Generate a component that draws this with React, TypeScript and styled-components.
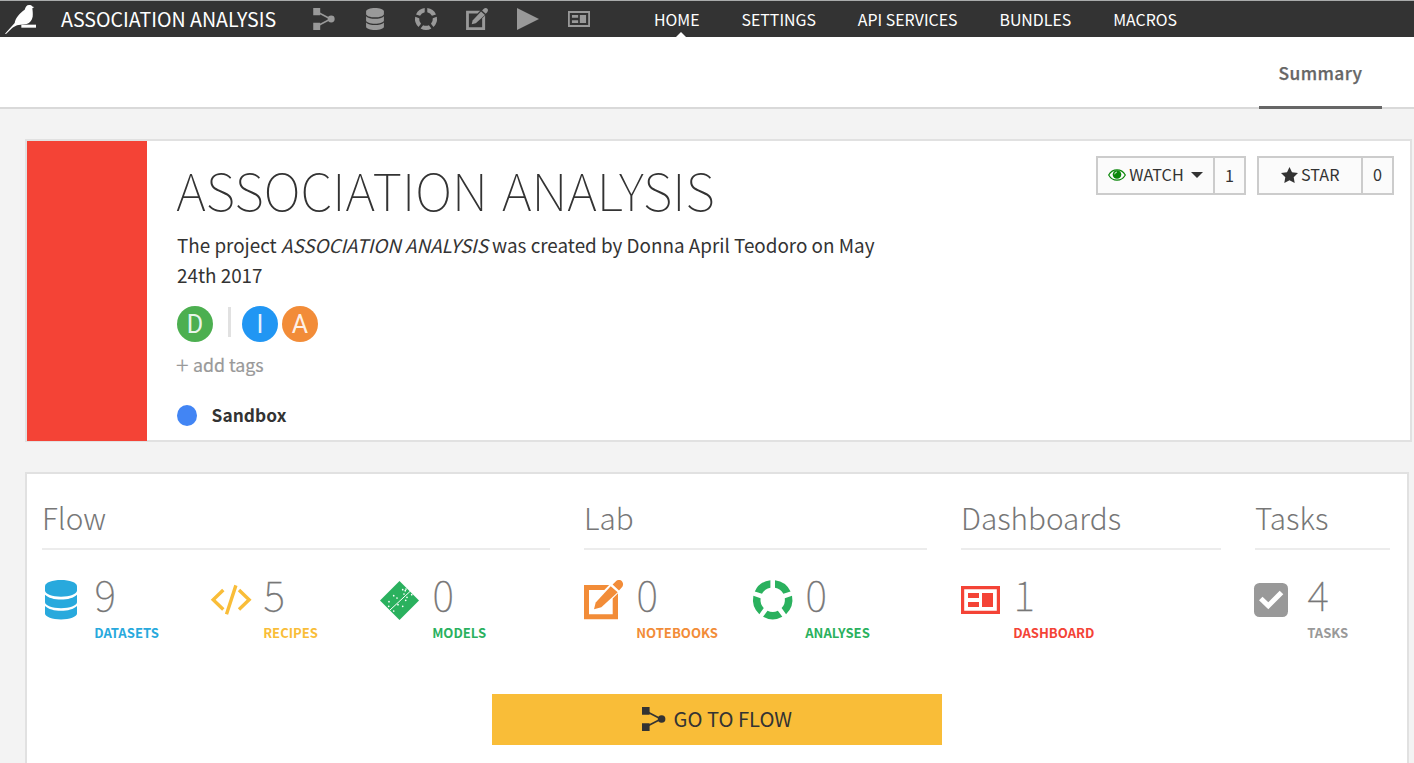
import React from 'react';
import styled, { createGlobalStyle, css } from 'styled-components';

const sans = '"Noto Sans CJK SC", "Noto Sans", sans-serif';

const palette = {
  blue: '#28a9dd',
  yellow: '#f9bd38',
  green: '#2ab15e',
  orange: '#f28c38',
  red: '#f44336',
  grey: '#999999',
};

const GlobalStyle = createGlobalStyle`
  * { box-sizing: border-box; }
  body {
    margin: 0;
    height: 763px;
    overflow: hidden;
    background: #f3f3f3;
    color: #333;
    font-family: ${sans};
  }
  svg { display: block; flex: none; overflow: visible; }
`;

/* ---------- icons ---------- */

interface IconProps {
  width: number;
  height: number;
}

const FlowIcon = ({ width, height }: IconProps) => (
  <svg width={width} height={height} viewBox="0 0 23.5 24" fill="currentColor">
    <path d="M0 0h7.6v7.8H0zM0 16.2h7.6V24H0z" />
    <circle cx="19.6" cy="12" r="3.8" />
    <path d="M6 5.2 19 12 6 18.8" fill="none" stroke="currentColor" strokeWidth="1.7" />
  </svg>
);

const DatabaseIcon = ({ width, height }: IconProps) => (
  <svg width={width} height={height} viewBox="0 0 32 39.5" fill="currentColor">
    <path d="M0 6.2C0 2.4 7.5 0 16 0s16 2.4 16 6.2v4.4c0 3.4-7.5 6.2-16 6.2S0 14 0 10.6Z" />
    <path d="M0 14.7c3 3.2 9.5 4.8 16 4.8s13-1.6 16-4.8v7.6c0 3.4-7.5 5.9-16 5.9S0 25.7 0 22.3Z" />
    <path d="M0 25.9c3 3.2 9.5 4.8 16 4.8s13-1.6 16-4.8v7.7c0 3.4-7.5 5.9-16 5.9S0 37 0 33.6Z" />
  </svg>
);

const RingIcon = ({ width, height }: IconProps) => {
  const outer = 19.7;
  const inner = 12.2;
  const half = 2.3;
  const point = (radius: number, angle: number, side: number) => {
    const spread = Math.asin(half / radius) * side;
    const a = angle + spread;
    return `${(20 + radius * Math.sin(a)).toFixed(2)} ${(20 - radius * Math.cos(a)).toFixed(2)}`;
  };
  const step = (Math.PI * 2) / 5;
  return (
    <svg width={width} height={height} viewBox="0.3 0.3 39.4 39.4" fill="currentColor">
      {[0, 1, 2, 3, 4].map((n) => {
        const from = n * step;
        const to = from + step;
        return (
          <path
            key={n}
            d={`M${point(outer, from, 1)}A${outer} ${outer} 0 0 1 ${point(outer, to, -1)}L${point(inner, to, -1)}A${inner} ${inner} 0 0 0 ${point(inner, from, 1)}Z`}
          />
        );
      })}
    </svg>
  );
};

const NotebookIcon = ({ width, height }: IconProps) => (
  <svg width={width} height={height} viewBox="0 0 39 39.3" fill="currentColor">
    <path d="M0 5h25.2l-4.9 5H5v24.3h23.7V18.5l5.3-5.2v26H0Z" />
    <path d="M26.7 6.3l7 6L17.3 27.3 10 29.2l1.7-6.8Z" />
    <path d="M28.6 4.5l3.1-3.1c2-2 5-1.7 6.4 0 1.5 1.7 1.3 4.3-.4 6.1l-2.7 2.9Z" />
  </svg>
);

const PlayIcon = ({ width, height }: IconProps) => (
  <svg width={width} height={height} viewBox="0 0 22 22" fill="currentColor">
    <path d="M0 0 22 11 0 22Z" />
  </svg>
);

const DashboardIcon = ({ width, height }: IconProps) => (
  <svg width={width} height={height} viewBox="0 0 39 28" fill="currentColor">
    <path fillRule="evenodd" d="M0 0h39v28H0zM3.2 3.2v21.6h32.6V3.2z" />
    <path d="M7 7h11v5H7zM7 16h11v5H7zM21 7h11v14H21z" />
  </svg>
);

const CodeIcon = ({ width, height }: IconProps) => (
  <svg width={width} height={height} viewBox="0 0 40 30" fill="none" stroke="currentColor" strokeWidth="3.4">
    <path d="M12.3 5 2.2 14.8l10.1 9.7M28 5l10.1 9.8L28 24.5M24.9.4 15.5 29.2" />
  </svg>
);

const modelDots = [
  [13.7, 14.7], [9, 20.7], [8.7, 25.3], [13.7, 30], [22.7, 8.7], [25.3, 9.7], [24, 13],
  [17, 17], [18, 23.7], [22.7, 25.3], [25.7, 19.3], [27, 16.3], [31.7, 13.7], [26, 8],
];

const ModelIcon = ({ width, height }: IconProps) => (
  <svg width={width} height={height} viewBox="0 0 39 39" fill="currentColor">
    <path d="M19.5 0 39 19.5 19.5 39 0 19.5Z" />
    <path d="M9.7 29.3 30.5 10" stroke="#fff" strokeWidth="1" />
    {modelDots.map(([x, y]) => (
      <circle key={`${x}-${y}`} cx={x} cy={y} r="0.85" fill="#fff" />
    ))}
  </svg>
);

const CheckIcon = ({ width, height }: IconProps) => (
  <svg width={width} height={height} viewBox="0 0 34 34">
    <rect width="34" height="34" rx="5.5" fill="currentColor" />
    <path d="M5 17.3 8.5 13.7l5.8 5.6L25.7 7.7l3.6 3.6-15 15Z" fill="#fff" />
  </svg>
);

const BirdIcon = ({ width, height }: IconProps) => (
  <svg width={width} height={height} viewBox="15 15 93 87" fill="#fff">
    <path d="M15 101 44 69C46 54 60 38 74 29 77 20 80 15 87 15c6 0 9 2 11 5l5 1-6 4c1 8 2 17 1 25-2 10-8 19-18 22-8 2-16 1-24 3-14 2-20 10-38 27Z" />
    <path d="M64 74h44v9H64z" />
  </svg>
);

const EyeIcon = ({ width, height }: IconProps) => (
  <svg width={width} height={height} viewBox="0 0 18 12">
    <path d="M.7 6C4.5-.9 13.5-.9 17.3 6 13.5 12.9 4.5 12.9.7 6Z" fill="none" stroke="#0a870a" strokeWidth="1.2" />
    <circle cx="9" cy="5.5" r="4.3" fill="#0a870a" />
    <path d="M6.7 5.3A2.4 2.4 0 0 1 9 3" fill="none" stroke="#fff" strokeWidth=".8" />
  </svg>
);

const StarIcon = ({ width, height }: IconProps) => (
  <svg width={width} height={height} viewBox="0 0 17 16" fill="currentColor">
    <path d="M8.5 0l2.5 5.3 6 .8-4.3 4.1 1 5.8-5.2-2.8L3.3 16l1-5.8L0 6.1l6-.8Z" />
  </svg>
);

/* ---------- top bar ---------- */

const TopBar = styled.header`
  display: flex;
  height: 37px;
  padding-left: 5px;
  border-top: 1px solid #a9abab;
  background: #333;
  color: #fff;
`;

const Logo = styled.div`
  width: 56px;
  padding-top: 4px;
`;

const Brand = styled.div`
  width: 252px;
  font-size: 19.6px;
  line-height: 36px;
  white-space: nowrap;
`;

const ToolIcons = styled.div`
  display: flex;
  align-items: center;
  width: 341px;
  color: #999;
`;

const Tool = styled.span<{ $width: number }>`
  width: ${(p) => p.$width}px;
`;

const Nav = styled.nav`
  display: flex;
  height: 36px;
  gap: 41.9px;
`;

const NavLink = styled.a<{ $active?: boolean }>`
  position: relative;
  font-size: 15.9px;
  line-height: 38px;
  white-space: nowrap;
  ${(p) =>
    p.$active &&
    css`
      &::after {
        content: '';
        position: absolute;
        left: 50%;
        bottom: 0;
        margin-left: -1px;
        border: 5px solid transparent;
        border-top: 0;
        border-bottom-color: #fff;
      }
    `}
`;

/* ---------- tab bar ---------- */

const TabBar = styled.div`
  display: flex;
  justify-content: flex-end;
  height: 72px;
  padding-right: 32px;
  background: #fff;
  box-shadow: inset 0 -2px #d9d9d9;
`;

const Tab = styled.div`
  width: 123px;
  border-bottom: 3px solid #666;
  color: #666;
  font-size: 17.4px;
  font-weight: 500;
  letter-spacing: 0.4px;
  line-height: 72px;
  text-align: center;
  -webkit-text-stroke: 0.25px #666;
`;

/* ---------- project card ---------- */

const Page = styled.main`
  padding: 30px 0 0 25px;
`;

const Card = styled.section<{ $width: number }>`
  width: ${(p) => p.$width}px;
  border: 2px solid #e1e1e1;
  background: #fff;
`;

const ProjectCard = styled(Card)`
  display: flex;
  height: 303px;
`;

const Swatch = styled.div`
  width: 120px;
  height: 300px;
  background: ${palette.red};
`;

const ProjectInfo = styled.div`
  flex: 1;
  padding: 18px 0 0 30px;
`;

const Title = styled.h1`
  margin: 0 0 11px -0.7px;
  font-size: 51.4px;
  font-weight: 100;
  line-height: 60px;
  word-spacing: 3px;
  white-space: nowrap;
`;

const Description = styled.p`
  width: 715px;
  margin: 0;
  font-size: 18.85px;
  line-height: 30px;
`;

const People = styled.div`
  display: flex;
  margin-top: 16px;
`;

const Avatar = styled.span<{ $color: string }>`
  width: 36px;
  height: 36px;
  margin-right: 4px;
  border-radius: 50%;
  background: ${(p) => p.$color};
  color: rgba(255, 255, 255, 0.9);
  font: 400 25px/37px Roboto, sans-serif;
  text-align: center;
`;

const Separator = styled.span`
  width: 3px;
  height: 30px;
  margin: 1px 11px 0;
  background: #e1e1e1;
`;

const AddTags = styled.div`
  display: flex;
  margin-top: 7px;
  color: #999;
  font-size: 17.8px;
  line-height: 30px;
  -webkit-text-stroke: 0.2px #999;
`;

const Plus = styled.span`
  width: 17px;
  margin-left: -1px;
  font-size: 23.5px;
  font-weight: 300;
  line-height: 30px;
`;

const Status = styled.div`
  display: flex;
  align-items: center;
  gap: 14.5px;
  margin-top: 24px;
  font-size: 17.3px;
  font-weight: 700;
  letter-spacing: 0.1px;
  line-height: 24px;
`;

const Dot = styled.span`
  width: 20px;
  height: 21px;
  margin-top: 1px;
  border-radius: 50%;
  background: #4285f4;
`;

const Actions = styled.div`
  display: flex;
  gap: 11px;
  padding: 15px 16px 0 0;
`;

const ActionGroup = styled.div`
  display: flex;
  height: 39px;
  border: 2px solid #ccc;
  background: #fbfbfb;
`;

const Action = styled.button<{ $width: number }>`
  display: flex;
  align-items: center;
  justify-content: center;
  width: ${(p) => p.$width}px;
  padding: 0 0 1px;
  border: 0;
  border-right: 2px solid #ccc;
  background: none;
  color: #333;
  font: 400 16.2px/33px ${sans};
`;

const ActionLabel = styled.span`
  margin: -1px 0 0 3.5px;
`;

const Count = styled.span<{ $raise?: boolean }>`
  width: 29px;
  font-size: 16.2px;
  line-height: ${(p) => (p.$raise ? 33 : 35)}px;
  text-align: center;
`;

const Caret = styled.span`
  margin-left: 7.5px;
  border: 6px solid transparent;
  border-top-color: #333;
  border-bottom: 0;
`;

/* ---------- summary card ---------- */

const SummaryCard = styled(Card)`
  height: 320px;
  margin-top: 30px;
  padding: 22px 0 0 15px;
`;

const Groups = styled.div`
  display: grid;
  grid-template-columns: 508px 343px 260px 135px;
  column-gap: 34px;
`;

const GroupTitle = styled.h2`
  height: 54px;
  margin: 0 0 19px;
  border-bottom: 2px solid #ececec;
  color: #777;
  font-size: 29.7px;
  font-weight: 300;
  line-height: 43px;
`;

const Stats = styled.div`
  display: flex;
`;

const Stat = styled.div<{ $color: string }>`
  display: flex;
  width: 169px;
  color: ${(p) => p.$color};
`;

const StatIcon = styled.div<{ $shift: number }>`
  display: flex;
  align-items: center;
  width: ${(p) => 52.2 - p.$shift}px;
  height: 62px;
  margin-left: ${(p) => p.$shift}px;
`;

const StatValue = styled.div`
  height: 54px;
  margin-left: 0.4px;
  color: #777;
  font-size: 41px;
  font-weight: 100;
  line-height: 48px;
  -webkit-text-stroke: 0.3px #777;
`;

const StatLabel = styled.div`
  font-size: 13.1px;
  font-weight: 700;
  line-height: 20px;
`;

const FlowButton = styled.button`
  display: flex;
  align-items: center;
  justify-content: center;
  gap: 8px;
  width: 450px;
  height: 51px;
  margin: 51px 0 0 450px;
  padding: 0 0 2px;
  border: 0;
  background: ${palette.yellow};
  color: #333;
  font: 400 20.2px/48px ${sans};
`;

interface StatData {
  value: number;
  label: string;
  color: string;
  icon: React.ReactNode;
  shift?: number;
}

const groups: { title: string; stats: StatData[] }[] = [
  {
    title: 'Flow',
    stats: [
      { value: 9, label: 'DATASETS', color: palette.blue, icon: <DatabaseIcon width={32} height={39.5} />, shift: 3 },
      { value: 5, label: 'RECIPES', color: palette.yellow, icon: <CodeIcon width={40} height={30} /> },
      { value: 0, label: 'MODELS', color: palette.green, icon: <ModelIcon width={39} height={39} />, shift: -0.5 },
    ],
  },
  {
    title: 'Lab',
    stats: [
      { value: 0, label: 'NOTEBOOKS', color: palette.orange, icon: <NotebookIcon width={39} height={39.3} /> },
      { value: 0, label: 'ANALYSES', color: palette.green, icon: <RingIcon width={39.4} height={39.4} />, shift: -0.5 },
    ],
  },
  {
    title: 'Dashboards',
    stats: [{ value: 1, label: 'DASHBOARD', color: palette.red, icon: <DashboardIcon width={39} height={28} /> }],
  },
  {
    title: 'Tasks',
    stats: [{ value: 4, label: 'TASKS', color: palette.grey, icon: <CheckIcon width={34} height={36} />, shift: -1 }],
  },
];

export default function App() {
  return (
    <>
      <GlobalStyle />
      <TopBar>
        <Logo>
          <BirdIcon width={31} height={29} />
        </Logo>
        <Brand>ASSOCIATION ANALYSIS</Brand>
        <ToolIcons>
          <Tool $width={53}><FlowIcon width={22} height={22} /></Tool>
          <Tool $width={49}><DatabaseIcon width={18} height={22} /></Tool>
          <Tool $width={51}><RingIcon width={22} height={22} /></Tool>
          <Tool $width={51}><NotebookIcon width={22} height={22} /></Tool>
          <Tool $width={51}><PlayIcon width={22} height={22} /></Tool>
          <Tool $width={86}><DashboardIcon width={22} height={16} /></Tool>
        </ToolIcons>
        <Nav>
          <NavLink $active>HOME</NavLink>
          <NavLink>SETTINGS</NavLink>
          <NavLink>API SERVICES</NavLink>
          <NavLink>BUNDLES</NavLink>
          <NavLink>MACROS</NavLink>
        </Nav>
      </TopBar>
      <TabBar>
        <Tab>Summary</Tab>
      </TabBar>
      <Page>
        <ProjectCard $width={1387}>
          <Swatch />
          <ProjectInfo>
            <Title>ASSOCIATION ANALYSIS</Title>
            <Description>
              The project <em>ASSOCIATION ANALYSIS</em> was created by Donna April Teodoro on May 24th 2017
            </Description>
            <People>
              <Avatar $color="#4caf50">D</Avatar>
              <Separator />
              <Avatar $color="#2196f3">I</Avatar>
              <Avatar $color={palette.orange}>A</Avatar>
            </People>
            <AddTags>
              <Plus>+</Plus>
              <span>add tags</span>
            </AddTags>
            <Status>
              <Dot />
              Sandbox
            </Status>
          </ProjectInfo>
          <Actions>
            <ActionGroup>
              <Action $width={117}>
                <EyeIcon width={18} height={12} />
                <ActionLabel>WATCH</ActionLabel>
                <Caret />
              </Action>
              <Count>1</Count>
            </ActionGroup>
            <ActionGroup>
              <Action $width={104}>
                <StarIcon width={17} height={16} />
                <ActionLabel>STAR</ActionLabel>
              </Action>
              <Count $raise>0</Count>
            </ActionGroup>
          </Actions>
        </ProjectCard>
        <SummaryCard $width={1384}>
          <Groups>
            {groups.map((group) => (
              <div key={group.title}>
                <GroupTitle>{group.title}</GroupTitle>
                <Stats>
                  {group.stats.map((stat) => (
                    <Stat key={stat.label} $color={stat.color}>
                      <StatIcon $shift={stat.shift ?? 0}>{stat.icon}</StatIcon>
                      <div>
                        <StatValue>{stat.value}</StatValue>
                        <StatLabel>{stat.label}</StatLabel>
                      </div>
                    </Stat>
                  ))}
                </Stats>
              </div>
            ))}
          </Groups>
          <FlowButton>
            <FlowIcon width={23.5} height={24} />
            GO TO FLOW
          </FlowButton>
        </SummaryCard>
      </Page>
    </>
  );
}
